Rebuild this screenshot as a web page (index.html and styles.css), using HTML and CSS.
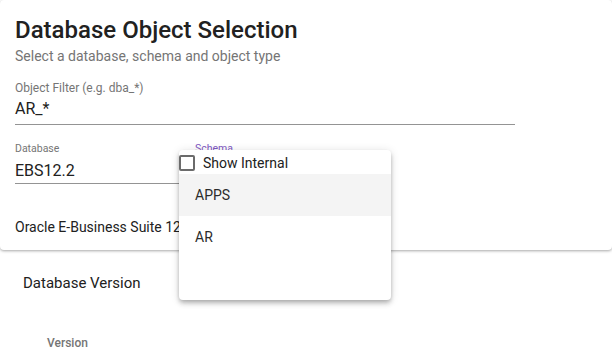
FILE: index.html
```html
<!DOCTYPE html>
<html>
<head>
<meta charset="utf-8">
<link rel="stylesheet" href="styles.css">
</head>
<body>
<div class="card">
  <h1 class="title">Database Object Selection</h1>
  <p class="subtitle">Select a database, schema and object type</p>
  <div class="field field-filter">
    <div class="label">Object Filter (e.g. dba_*)</div>
    <div class="value value-filter">AR_*</div>
  </div>
  <div class="row">
    <div class="field field-db">
      <div class="label label-float">Database</div>
      <div class="value">EBS12.2</div>
    </div>
    <div class="field field-schema">
      <div class="label label-float label-active">Schema</div>
      <div class="popup">
        <div class="check-row">
          <span class="checkbox"></span>
          <span class="check-text">Show Internal</span>
        </div>
        <div class="option option-hover">APPS</div>
        <div class="option">AR</div>
      </div>
    </div>
  </div>
  <p class="desc">Oracle E-Business Suite 12.2</p>
</div>
<div class="section">
  <h2 class="section-title">Database Version</h2>
  <div class="col-head">Version</div>
</div>
</body>
</html>
```

FILE: styles.css
```css
* { box-sizing: border-box; }
body {
  margin: 0;
  font-family: Roboto, "Liberation Sans", sans-serif;
  background: #fff;
  color: #212121;
}
.card {
  padding: 16px 15px 13px;
  border-radius: 4px;
  box-shadow: 0 1px 3px rgba(0,0,0,0.35);
  background: #fff;
}
.title {
  margin: 0;
  font-size: 24px;
  line-height: 28px;
  font-weight: 500;
  color: #212121;
}
.subtitle {
  margin: 2px 0 0;
  font-size: 14px;
  line-height: 20px;
  color: #757575;
}
.field-filter {
  width: 500px;
  margin-top: 14px;
}
.label {
  font-size: 12px;
  line-height: 16px;
  color: #757575;
}
.label-float {
  font-size: 10.5px;
  line-height: 14px;
}
.label-active { color: #7e57c2; }
.value {
  font-size: 16px;
  line-height: 24px;
  color: #212121;
  border-bottom: 1px solid #949494;
  margin-top: 3px;
}
.value-filter {
  margin-top: 1px;
  padding-bottom: 3px;
}
.row {
  display: flex;
  gap: 15px;
  margin-top: 17px;
}
.field-db { width: 165px; }
.field-schema {
  position: relative;
  width: 200px;
}
.popup {
  position: absolute;
  left: -16px;
  top: 8px;
  width: 212px;
  height: 150px;
  background: #fff;
  border-radius: 4px;
  box-shadow: 0 2px 4px -1px rgba(0,0,0,.2), 0 4px 5px 0 rgba(0,0,0,.14), 0 1px 10px 0 rgba(0,0,0,.12);
  z-index: 2;
}
.check-row {
  display: flex;
  align-items: center;
  gap: 8px;
  height: 24px;
  padding-top: 1px;
}
.checkbox {
  width: 16px;
  height: 16px;
  border: 2px solid #6b6b6b;
  border-radius: 2px;
}
.check-text {
  font-size: 14px;
  line-height: 20px;
  color: #212121;
}
.option {
  height: 42px;
  line-height: 42px;
  padding-left: 16px;
  font-size: 14px;
  color: #2b2b2b;
}
.option-hover { background: #f4f4f4; }
.desc {
  margin: 33px 0 0;
  font-size: 14px;
  line-height: 20px;
  color: #212121;
}
.section {
  padding: 21px 23px 0;
}
.section-title {
  margin: 0;
  font-size: 15px;
  line-height: 24px;
  font-weight: 400;
  color: #212121;
}
.col-head {
  margin: 40px 0 0 24px;
  font-size: 12px;
  line-height: 16px;
  font-weight: 500;
  color: #757575;
}
```
